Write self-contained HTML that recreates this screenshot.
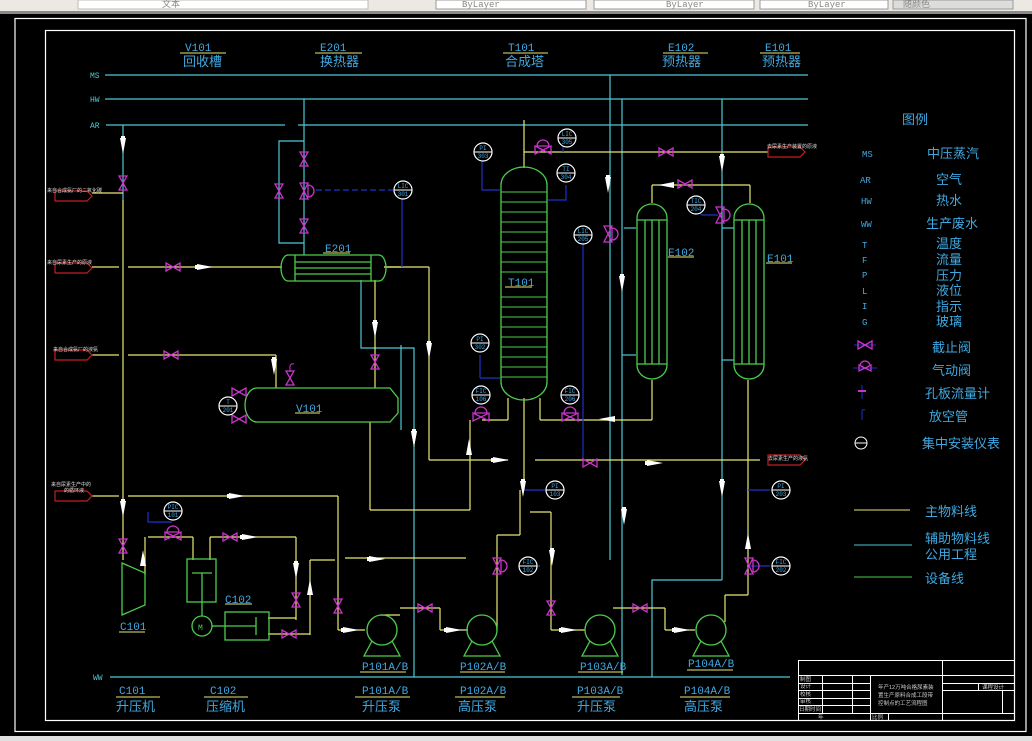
<!DOCTYPE html>
<html><head><meta charset="utf-8">
<style>
html,body{margin:0;padding:0;background:#000;width:1032px;height:741px;overflow:hidden}
svg{display:block}
text{font-family:"Liberation Mono","Noto Sans CJK SC",monospace}
.cn{font-family:"Liberation Sans","Noto Sans CJK SC",sans-serif}
</style></head><body>
<svg width="1032" height="741" viewBox="0 0 1032 741" xmlns="http://www.w3.org/2000/svg">
<defs>
<g id="vh"><path d="M-7,-4 L7,4 L7,-4 L-7,4 Z" fill="none" stroke="#cc33cc" stroke-width="1.3"/></g>
<g id="vv"><path d="M-4,-7 L4,7 L-4,7 L4,-7 Z" fill="none" stroke="#cc33cc" stroke-width="1.3"/></g>
<g id="cvh"><path d="M-8,-3 L8,5 L8,-3 L-8,5 Z" fill="none" stroke="#cc33cc" stroke-width="1.3"/><path d="M-6,-3 A6,6 0 0 1 6,-3 Z" fill="none" stroke="#cc33cc" stroke-width="1.3"/></g>
<g id="cvv"><path d="M-4,-8 L4,8 L-4,8 L4,-8 Z" fill="none" stroke="#cc33cc" stroke-width="1.3"/><path d="M4,-6 A6,6 0 0 1 4,6 Z" fill="none" stroke="#cc33cc" stroke-width="1.3"/></g>
<g id="ar"><path d="M-9,-3 L7,0 L-9,3 Z M-9,-2 h-2 v4 h2" fill="#fff"/></g>
<g id="ad"><path d="M-3,-9 L0,7 L3,-9 Z M-2,-9 v-2 h4 v2" fill="#fff"/></g>
<g id="au"><path d="M-3,9 L0,-7 L3,9 Z" fill="#fff"/></g>
<g id="al"><path d="M9,-3 L-7,0 L9,3 Z" fill="#fff"/></g>
<g id="ins"><circle r="9" fill="#000" stroke="#fff" stroke-width="1.2"/><line x1="-9" y1="0" x2="9" y2="0" stroke="#fff" stroke-width="1"/></g>
<g id="pump"><circle r="15" fill="none" stroke="#4ccc4c" stroke-width="1.3"/><path d="M-10,11 L-18,26 L18,26 L10,11" fill="none" stroke="#4ccc4c" stroke-width="1.3"/></g>
<g id="tag"><path d="M0,-5 H32 L37,0 L32,5 H0 Z" fill="none" stroke="#c02020" stroke-width="1.2"/></g>
</defs>

<!-- toolbar -->
<rect x="0" y="0" width="1032" height="12" fill="#ebe9e2"/>
<rect x="0" y="11" width="1032" height="3" fill="#8a8a8a"/>
<rect x="436" y="0" width="150" height="9" fill="#fff" stroke="#999"/>
<rect x="594" y="0" width="160" height="9" fill="#fff" stroke="#999"/>
<rect x="760" y="0" width="128" height="9" fill="#fff" stroke="#999"/>
<rect x="893" y="0" width="120" height="9" fill="#ddd" stroke="#999"/>
<rect x="78" y="0" width="290" height="9" fill="#fff" stroke="#bbb"/>
<text x="162" y="7" font-size="9" fill="#888" class="cn">文本</text>
<text x="462" y="7" font-size="9" fill="#888">ByLayer</text>
<text x="666" y="7" font-size="9" fill="#888">ByLayer</text>
<text x="808" y="7" font-size="9" fill="#888">ByLayer</text>
<text x="903" y="7" font-size="9" fill="#888" class="cn">随颜色</text>
<rect x="0" y="736" width="1032" height="5" fill="#e0e0e0"/>

<!-- borders -->
<rect x="15" y="18.5" width="1011" height="713" fill="none" stroke="#fff" stroke-width="1.2"/>
<rect x="45.5" y="30.5" width="969" height="690" fill="none" stroke="#fff" stroke-width="1.2"/>

<!-- header labels -->
<g fill="#40a8e0" font-size="11">
<text x="185" y="51">V101</text><text x="320" y="51">E201</text><text x="508" y="51">T101</text><text x="668" y="51">E102</text><text x="765" y="51">E101</text>
</g>
<g stroke="#e8e870" stroke-width="1"><line x1="180" y1="53" x2="226" y2="53"/><line x1="315" y1="53" x2="362" y2="53"/><line x1="503" y1="53" x2="548" y2="53"/><line x1="663" y1="53" x2="708" y2="53"/><line x1="760" y1="53" x2="800" y2="53"/></g>
<g fill="#40a8e0" font-size="13" class="cn">
<text x="183" y="66" class="cn">回收槽</text><text x="320" y="66" class="cn">换热器</text><text x="505" y="66" class="cn">合成塔</text><text x="662" y="66" class="cn">预热器</text><text x="762" y="66" class="cn">预热器</text>
</g>

<!-- utility lines -->
<g fill="#4cc8d8" font-size="8"><text x="90" y="78">MS</text><text x="90" y="102">HW</text><text x="90" y="128">AR</text><text x="93" y="680">WW</text></g>
<g stroke="#4cc8d8" stroke-width="1.2" fill="none">
<line x1="105" y1="75" x2="808" y2="75"/>
<line x1="105" y1="99" x2="808" y2="99"/>
<line x1="106" y1="125" x2="285" y2="125"/><line x1="298" y1="125" x2="808" y2="125"/>
<line x1="110" y1="677" x2="790" y2="677"/>
<!-- AR down to compressor -->
<line x1="123" y1="125" x2="123" y2="200"/>
<!-- E201 bypass -->
<polyline points="304,99 304,255"/><polyline points="304,141 279,141 279,243 304,243"/>
<!-- E201 bottom to V101 region -->
<polyline points="361,280 361,348 414,348 414,677"/>
<!-- T101 area cyan -->
<line x1="610" y1="75" x2="610" y2="560"/>
<line x1="622" y1="99" x2="622" y2="675"/>
<polyline points="622,355 636,355"/>
<polyline points="624,228 636,228"/>
<line x1="722" y1="99" x2="722" y2="580"/>
<polyline points="722,228 734,228"/>
<polyline points="734,360 722,360"/>
<polyline points="722,580 652,580 652,677"/>
<line x1="401" y1="345" x2="401" y2="430"/>
</g>

<!-- yellow main lines -->
<g stroke="#e8e870" stroke-width="1.2" fill="none">
<line x1="123" y1="200" x2="123" y2="560"/>
<line x1="92" y1="193" x2="123" y2="193"/>
<line x1="92" y1="267" x2="119" y2="267"/><line x1="128" y1="267" x2="282" y2="267"/>
<line x1="92" y1="355" x2="119" y2="355"/><line x1="128" y1="355" x2="276" y2="355"/><line x1="276" y1="355" x2="276" y2="388"/>
<line x1="92" y1="496" x2="119" y2="496"/><line x1="128" y1="496" x2="338" y2="496"/><line x1="338" y1="496" x2="338" y2="630"/><line x1="338" y1="630" x2="365" y2="630"/>
<line x1="384" y1="267" x2="429" y2="267"/><line x1="429" y1="267" x2="429" y2="460"/><line x1="429" y1="460" x2="508" y2="460"/>
<line x1="375" y1="280" x2="375" y2="388"/>
<line x1="370" y1="422" x2="370" y2="510"/><line x1="370" y1="510" x2="470" y2="510"/><line x1="470" y1="510" x2="470" y2="420"/>
<line x1="524" y1="120" x2="524" y2="168"/><line x1="524" y1="152" x2="768" y2="152"/>
<line x1="508" y1="398" x2="508" y2="420"/><line x1="482" y1="420" x2="508" y2="420"/>
<line x1="540" y1="398" x2="540" y2="420"/><line x1="540" y1="420" x2="652" y2="420"/><line x1="652" y1="420" x2="652" y2="380"/>
<line x1="524" y1="398" x2="524" y2="490"/>
<line x1="535" y1="460" x2="760" y2="460"/>
<line x1="652" y1="203" x2="652" y2="185"/><line x1="652" y1="185" x2="750" y2="185"/><line x1="750" y1="185" x2="750" y2="203"/>
<line x1="748" y1="380" x2="748" y2="595"/><line x1="748" y1="595" x2="725" y2="595"/><line x1="725" y1="595" x2="725" y2="622"/>
<line x1="520" y1="490" x2="520" y2="535"/><line x1="520" y1="535" x2="497" y2="535"/><line x1="497" y1="535" x2="497" y2="630"/>
<line x1="530" y1="512" x2="551" y2="512"/><line x1="551" y1="512" x2="551" y2="630"/><line x1="551" y1="630" x2="585" y2="630"/>
<line x1="345" y1="558" x2="466" y2="558"/><line x1="310" y1="560" x2="310" y2="635"/><line x1="310" y1="560" x2="335" y2="560"/>
<line x1="400" y1="608" x2="440" y2="608"/><line x1="440" y1="608" x2="440" y2="630"/><line x1="440" y1="630" x2="468" y2="630"/>
<line x1="613" y1="608" x2="665" y2="608"/><line x1="665" y1="608" x2="665" y2="630"/><line x1="665" y1="630" x2="695" y2="630"/>
<line x1="380" y1="615" x2="400" y2="615"/>
<line x1="148" y1="537" x2="193" y2="537"/><line x1="193" y1="537" x2="193" y2="560"/>
<line x1="210" y1="560" x2="210" y2="537"/><line x1="210" y1="537" x2="296" y2="537"/><line x1="296" y1="537" x2="296" y2="620"/>
<line x1="268" y1="618" x2="296" y2="618"/><line x1="268" y1="634" x2="310" y2="634"/>
<line x1="145" y1="537" x2="145" y2="575"/>
<line x1="384" y1="267" x2="401" y2="267"/>
<line x1="600" y1="460" x2="600" y2="460"/>
<line x1="808" y1="152" x2="808" y2="152"/>
<line x1="790" y1="460" x2="790" y2="460"/>
</g>

<!-- instrument blue lines -->
<g stroke="#2030c8" stroke-width="1.2" fill="none">
<line x1="316" y1="190" x2="393" y2="190" stroke-dasharray="6,3"/><line x1="402" y1="199" x2="402" y2="267"/>
<polyline points="482,160 482,190 500,190"/><polyline points="548,200 566,200 566,185"/>
<line x1="583" y1="244" x2="583" y2="460"/>
<line x1="480" y1="355" x2="480" y2="378"/><polyline points="480,378 500,378"/>
<polyline points="148,512 148,522 172,522"/>
<polyline points="696,210 702,215 718,215"/>
<polyline points="524,490 548,490"/>
<polyline points="520,566 540,566"/>
<polyline points="750,566 770,566"/>
<line x1="748" y1="490" x2="770" y2="490"/>
<polyline points="563,152 563,140"/>
</g>

<!-- equipment green -->
<g stroke="#4ccc4c" stroke-width="1.3" fill="none">
<!-- T101 -->
<path d="M501,185 A23,18 0 0 1 547,185 V382 A23,18 0 0 1 501,382 Z"/>
<g stroke-width="1"><line x1="501" y1="192" x2="547" y2="192"/><line x1="501" y1="202" x2="547" y2="202"/><line x1="501" y1="212" x2="547" y2="212"/><line x1="501" y1="222" x2="547" y2="222"/><line x1="501" y1="232" x2="547" y2="232"/><line x1="501" y1="242" x2="547" y2="242"/><line x1="501" y1="252" x2="547" y2="252"/><line x1="501" y1="262" x2="547" y2="262"/><line x1="501" y1="272" x2="547" y2="272"/><line x1="501" y1="297" x2="547" y2="297"/><line x1="501" y1="307" x2="547" y2="307"/><line x1="501" y1="317" x2="547" y2="317"/><line x1="501" y1="327" x2="547" y2="327"/><line x1="501" y1="337" x2="547" y2="337"/><line x1="501" y1="347" x2="547" y2="347"/><line x1="501" y1="357" x2="547" y2="357"/><line x1="501" y1="367" x2="547" y2="367"/><line x1="501" y1="377" x2="547" y2="377"/></g>
<!-- E102 -->
<path d="M637,218 A15,14 0 0 1 667,218 V365 A15,14 0 0 1 637,365 Z"/>
<line x1="637" y1="220" x2="667" y2="220"/><line x1="637" y1="364" x2="667" y2="364"/>
<line x1="645" y1="220" x2="645" y2="364"/><line x1="652" y1="220" x2="652" y2="364"/><line x1="659" y1="220" x2="659" y2="364"/>
<!-- E101 -->
<path d="M734,218 A15,14 0 0 1 764,218 V365 A15,14 0 0 1 734,365 Z"/>
<line x1="734" y1="220" x2="764" y2="220"/><line x1="734" y1="364" x2="764" y2="364"/>
<line x1="742" y1="220" x2="742" y2="364"/><line x1="749" y1="220" x2="749" y2="364"/><line x1="756" y1="220" x2="756" y2="364"/>
<!-- E201 -->
<path d="M288,255 H379 A7,13 0 0 1 379,281 H288 A7,13 0 0 1 288,255 Z"/>
<line x1="295" y1="255" x2="295" y2="281"/><line x1="371" y1="255" x2="371" y2="281"/>
<line x1="295" y1="262" x2="371" y2="262"/><line x1="295" y1="268" x2="371" y2="268"/><line x1="295" y1="274" x2="371" y2="274"/>
<!-- V101 -->
<path d="M257,388 H390 L398,398 V413 L390,422 H257 A12,17 0 0 1 257,388 Z"/>
<!-- C101 -->
<path d="M122,563 L145,573 V605 L122,615 Z"/>
<!-- C102 -->
<rect x="187" y="559" width="29" height="43"/><line x1="192" y1="573" x2="212" y2="573"/><line x1="202" y1="573" x2="202" y2="616"/>
<circle cx="202" cy="626" r="10"/><line x1="212" y1="626" x2="225" y2="626"/>
<rect x="225" y="612" width="44" height="28"/><line x1="225" y1="626" x2="256" y2="626"/><line x1="256" y1="617" x2="256" y2="635"/>
</g>
<text x="198" y="630" font-size="8" fill="#4ccc4c">M</text>
<use href="#pump" x="382" y="630"/><use href="#pump" x="482" y="630"/><use href="#pump" x="600" y="630"/><use href="#pump" x="711" y="630"/>

<!-- equipment labels -->
<g fill="#40a8e0" font-size="11">
<text x="508" y="286">T101</text><text x="668" y="256">E102</text><text x="767" y="262">E101</text>
<text x="325" y="252">E201</text><text x="296" y="412">V101</text>
<text x="120" y="630">C101</text><text x="225" y="603">C102</text>
<text x="362" y="670">P101A/B</text><text x="460" y="670">P102A/B</text><text x="580" y="670">P103A/B</text><text x="688" y="667">P104A/B</text>
<text x="119" y="694">C101</text><text x="210" y="694">C102</text><text x="362" y="694">P101A/B</text><text x="460" y="694">P102A/B</text><text x="577" y="694">P103A/B</text><text x="684" y="694">P104A/B</text>
</g>
<g stroke="#e8e870" stroke-width="1">
<line x1="505" y1="287" x2="532" y2="287"/><line x1="668" y1="257" x2="694" y2="257"/><line x1="766" y1="263" x2="792" y2="263"/><line x1="323" y1="253" x2="350" y2="253"/><line x1="295" y1="413" x2="320" y2="413"/>
<line x1="119" y1="632" x2="145" y2="632"/><line x1="225" y1="604" x2="252" y2="604"/>
<line x1="360" y1="672" x2="406" y2="672"/><line x1="460" y1="672" x2="505" y2="672"/><line x1="578" y1="672" x2="623" y2="672"/><line x1="687" y1="670" x2="733" y2="670"/>
<line x1="116" y1="697" x2="160" y2="697"/><line x1="204" y1="697" x2="248" y2="697"/><line x1="355" y1="697" x2="410" y2="697"/><line x1="455" y1="697" x2="505" y2="697"/><line x1="572" y1="697" x2="620" y2="697"/><line x1="680" y1="697" x2="730" y2="697"/>
</g>
<g fill="#40a8e0" font-size="13">
<text x="116" y="711" class="cn">升压机</text><text x="206" y="711" class="cn">压缩机</text><text x="362" y="711" class="cn">升压泵</text><text x="458" y="711" class="cn">高压泵</text><text x="577" y="711" class="cn">升压泵</text><text x="684" y="711" class="cn">高压泵</text>
</g>

<!-- source tags -->
<use href="#tag" x="55" y="196"/><use href="#tag" x="55" y="268"/><use href="#tag" x="55" y="355"/><use href="#tag" x="55" y="496"/>
<use href="#tag" x="768" y="152"/><use href="#tag" x="768" y="460"/>
<g fill="#ddd" font-size="5" class="cn">
<text x="47" y="192" class="cn">来自合成氨厂的二氧化碳</text>
<text x="47" y="264" class="cn">来自尿素生产的原液</text>
<text x="53" y="351" class="cn">来自合成氨厂的液氨</text>
<text x="51" y="486" class="cn">来自尿素生产中的</text><text x="64" y="492" class="cn">的循环液</text>
<text x="767" y="148" class="cn">去尿素生产装置的原液</text>
<text x="768" y="460" class="cn">去尿素生产的液氨</text>
</g>

<!-- valves -->
<use href="#vv" x="123" y="183"/><use href="#vv" x="304" y="159"/><use href="#vv" x="279" y="191"/><use href="#cvv" x="304" y="191"/><use href="#vv" x="304" y="226"/>
<use href="#vh" x="173" y="267"/><use href="#vh" x="171" y="355"/><use href="#vv" x="375" y="362"/><use href="#vv" x="290" y="378"/>
<use href="#vh" x="239" y="392"/><use href="#vh" x="239" y="419"/>
<use href="#cvh" x="543" y="149"/><use href="#vh" x="666" y="152"/><use href="#vh" x="685" y="184"/><use href="#cvv" x="720" y="215"/><use href="#cvv" x="608" y="234"/>
<use href="#cvh" x="481" y="416"/><use href="#cvh" x="570" y="416"/>
<use href="#vh" x="590" y="463"/><use href="#vv" x="123" y="546"/><use href="#cvh" x="173" y="535"/><use href="#vh" x="230" y="537"/>
<use href="#vv" x="296" y="600"/><use href="#vh" x="289" y="634"/><use href="#vv" x="338" y="606"/><use href="#vh" x="425" y="608"/>
<use href="#cvv" x="497" y="566"/><use href="#vv" x="551" y="608"/><use href="#vh" x="640" y="608"/><use href="#cvv" x="749" y="566"/>
<path d="M290,372 v-6 a3,3 0 0 1 4,-2" stroke="#cc33cc" fill="none"/>

<!-- arrows -->
<use href="#ad" x="123" y="147"/><use href="#ar" x="206" y="267"/><use href="#ad" x="375" y="331"/><use href="#ad" x="429" y="352"/><use href="#ad" x="274" y="368"/>
<use href="#ad" x="414" y="440"/><use href="#ad" x="608" y="186"/><use href="#ad" x="622" y="285"/><use href="#al" x="665" y="185"/><use href="#ad" x="722" y="165"/>
<use href="#al" x="606" y="419"/><use href="#ar" x="502" y="460"/><use href="#ar" x="656" y="463"/><use href="#ad" x="722" y="490"/>
<use href="#ad" x="123" y="510"/><use href="#au" x="143" y="557"/><use href="#ar" x="238" y="496"/><use href="#ar" x="251" y="537"/>
<use href="#ad" x="296" y="572"/><use href="#au" x="310" y="586"/><use href="#ar" x="378" y="559"/><use href="#ad" x="414" y="440"/>
<use href="#ad" x="624" y="518"/><use href="#au" x="469" y="446"/><use href="#ad" x="552" y="559"/><use href="#au" x="748" y="540"/>
<use href="#ar" x="352" y="630"/><use href="#ar" x="455" y="630"/><use href="#ar" x="570" y="630"/><use href="#ar" x="683" y="630"/><use href="#ad" x="523" y="490"/>

<!-- instruments -->
<g font-size="6" fill="#40a8e0" text-anchor="middle">
<use href="#ins" x="483" y="152"/><text x="483" y="150">PI</text><text x="483" y="158">303</text>
<use href="#ins" x="567" y="138"/><text x="567" y="136">LIC</text><text x="567" y="144">305</text>
<use href="#ins" x="566" y="173"/><text x="566" y="171">TI</text><text x="566" y="179">304</text>
<use href="#ins" x="403" y="190"/><text x="403" y="188">LIC</text><text x="403" y="196">301</text>
<use href="#ins" x="583" y="235"/><text x="583" y="233">LIC</text><text x="583" y="241">205</text>
<use href="#ins" x="696" y="205"/><text x="696" y="203">TIC</text><text x="696" y="211">204</text>
<use href="#ins" x="480" y="343"/><text x="480" y="341">PI</text><text x="480" y="349">302</text>
<use href="#ins" x="481" y="395"/><text x="481" y="393">FIC</text><text x="481" y="401">106</text>
<use href="#ins" x="570" y="395"/><text x="570" y="393">FIC</text><text x="570" y="401">206</text>
<use href="#ins" x="228" y="406"/><text x="228" y="404">T</text><text x="228" y="412">201</text>
<use href="#ins" x="555" y="490"/><text x="555" y="488">PI</text><text x="555" y="496">103</text>
<use href="#ins" x="781" y="490"/><text x="781" y="488">PI</text><text x="781" y="496">203</text>
<use href="#ins" x="173" y="511"/><text x="173" y="509">PIC</text><text x="173" y="517">101</text>
<use href="#ins" x="528" y="566"/><text x="528" y="564">FIC</text><text x="528" y="572">102</text>
<use href="#ins" x="781" y="566"/><text x="781" y="564">FIC</text><text x="781" y="572">202</text>
</g>

<!-- legend -->
<g fill="#40a8e0">
<text x="902" y="124" font-size="13" class="cn">图例</text>
<g font-size="9"><text x="862" y="157">MS</text><text x="860" y="183">AR</text><text x="861" y="204">HW</text><text x="861" y="227">WW</text><text x="862" y="248">T</text><text x="862" y="263">F</text><text x="862" y="278">P</text><text x="862" y="294">L</text><text x="862" y="309">I</text><text x="862" y="325">G</text></g>
<g font-size="13" class="cn"><text x="927" y="158" class="cn">中压蒸汽</text><text x="936" y="184" class="cn">空气</text><text x="936" y="205" class="cn">热水</text><text x="926" y="228" class="cn">生产废水</text><text x="936" y="248" class="cn">温度</text><text x="936" y="264" class="cn">流量</text><text x="936" y="280" class="cn">压力</text><text x="936" y="295" class="cn">液位</text><text x="936" y="311" class="cn">指示</text><text x="936" y="326" class="cn">玻璃</text>
<text x="932" y="352" class="cn">截止阀</text><text x="932" y="375" class="cn">气动阀</text><text x="925" y="398" class="cn">孔板流量计</text><text x="929" y="421" class="cn">放空管</text><text x="922" y="448" class="cn">集中安装仪表</text>
<text x="925" y="516" class="cn">主物料线</text><text x="925" y="543" class="cn">辅助物料线</text><text x="925" y="559" class="cn">公用工程</text><text x="925" y="583" class="cn">设备线</text></g>
</g>
<line x1="854" y1="345" x2="876" y2="345" stroke="#2030c8"/><use href="#vh" x="865" y="345"/>
<line x1="853" y1="368" x2="877" y2="368" stroke="#2030c8"/><path d="M859,365 L871,371 L871,365 L859,371 Z M860,366 A5,5 0 0 1 870,366" fill="none" stroke="#cc33cc" stroke-width="1.3"/>
<line x1="862" y1="385" x2="862" y2="399" stroke="#2030c8"/><line x1="858" y1="391" x2="866" y2="391" stroke="#cc33cc" stroke-width="2"/>
<path d="M862,420 v-9 a2,2 0 0 1 3,-1" fill="none" stroke="#2030c8"/>
<circle cx="861" cy="443" r="6" fill="none" stroke="#fff"/><line x1="855" y1="443" x2="867" y2="443" stroke="#fff"/>
<line x1="854" y1="510" x2="910" y2="510" stroke="#e8e870"/>
<line x1="854" y1="545" x2="912" y2="545" stroke="#4cc8d8"/>
<line x1="854" y1="577" x2="912" y2="577" stroke="#4ccc4c"/>

<!-- title block -->
<g stroke="#fff" stroke-width="1" fill="none">
<rect x="798.5" y="660.5" width="216" height="60"/>
<line x1="798" y1="675.5" x2="1015" y2="675.5"/>
<line x1="942.5" y1="660" x2="942.5" y2="721"/>
<line x1="822.5" y1="675" x2="822.5" y2="713"/><line x1="852.5" y1="675" x2="852.5" y2="713"/><line x1="870.5" y1="675" x2="870.5" y2="721"/>
<line x1="798" y1="683.5" x2="870" y2="683.5"/><line x1="798" y1="690.5" x2="870" y2="690.5"/><line x1="798" y1="698.5" x2="870" y2="698.5"/><line x1="798" y1="705.5" x2="870" y2="705.5"/><line x1="798" y1="713.5" x2="1015" y2="713.5"/>
<line x1="942" y1="683.5" x2="1015" y2="683.5"/><line x1="942" y1="690.5" x2="1015" y2="690.5"/>
<line x1="978.5" y1="683" x2="978.5" y2="690"/><line x1="1002.5" y1="690" x2="1002.5" y2="713"/>
<line x1="888.5" y1="713" x2="888.5" y2="721"/>
</g>
<g fill="#ccc" font-size="5.5" class="cn">
<text x="800" y="681" class="cn">制图</text><text x="800" y="688" class="cn">设计</text><text x="800" y="696" class="cn">校核</text><text x="800" y="703" class="cn">审核</text><text x="799" y="711" class="cn">日期时间</text><text x="818" y="719" class="cn">年</text>
<text x="878" y="689" class="cn">年产12万吨合格尿素装</text><text x="878" y="697" class="cn">置生产原料合成工段带</text><text x="878" y="705" class="cn">控制点的工艺流程图</text>
<text x="872" y="719" class="cn">比例</text><text x="982" y="689" class="cn">课程设计</text>
</g>
</svg>
</body></html>
